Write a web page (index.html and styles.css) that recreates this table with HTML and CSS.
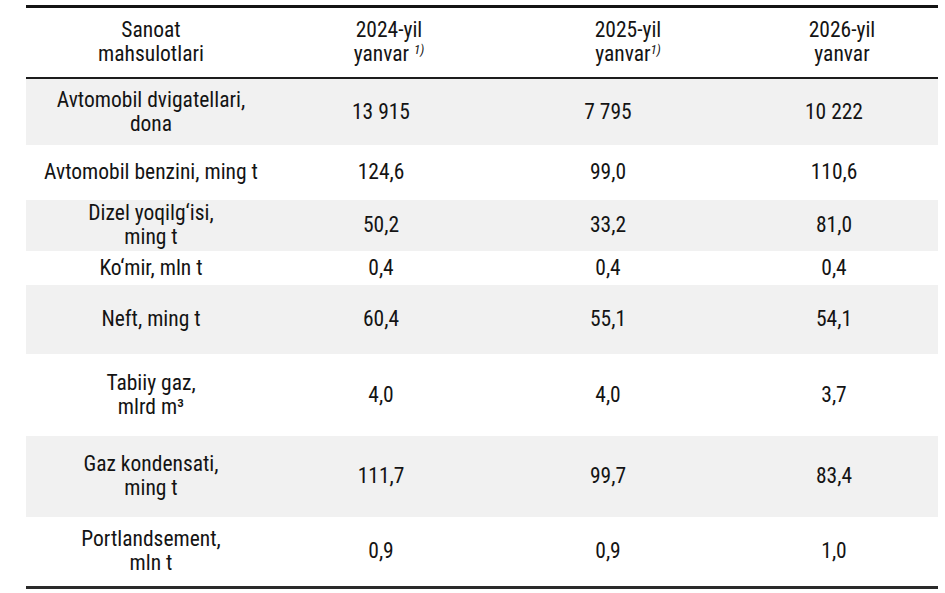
FILE: index.html
```html
<!DOCTYPE html>
<html lang="uz">
<head>
<meta charset="utf-8">
<title>Sanoat mahsulotlari</title>
<link rel="stylesheet" href="styles.css">
</head>
<body>
<table class="tbl">
  <colgroup>
    <col class="c1"><col class="c2"><col class="c3"><col class="c4">
  </colgroup>
  <thead>
    <tr class="h-head">
      <th>Sanoat<br>mahsulotlari</th>
      <th class="hs2">2024-yil<br>yanvar <sup class="fn">1)</sup></th>
      <th class="hs3">2025-yil<br>yanvar<sup class="fn">1)</sup></th>
      <th class="hs4">2026-yil<br>yanvar</th>
    </tr>
  </thead>
  <tbody>
    <tr class="gray h66"><td>Avtomobil dvigatellari,<br>dona</td><td>13 915</td><td>7 795</td><td>10 222</td></tr>
    <tr class="h54"><td>Avtomobil benzini, ming t</td><td>124,6</td><td>99,0</td><td>110,6</td></tr>
    <tr class="gray h51"><td>Dizel yoqilg‘isi,<br>ming t</td><td>50,2</td><td>33,2</td><td>81,0</td></tr>
    <tr class="h34"><td>Ko‘mir, mln t</td><td>0,4</td><td>0,4</td><td>0,4</td></tr>
    <tr class="gray h68"><td>Neft, ming t</td><td>60,4</td><td>55,1</td><td>54,1</td></tr>
    <tr class="h82"><td>Tabiiy gaz,<br>mlrd m³</td><td>4,0</td><td>4,0</td><td>3,7</td></tr>
    <tr class="gray h80"><td>Gaz kondensati,<br>ming t</td><td>111,7</td><td>99,7</td><td>83,4</td></tr>
    <tr class="h71"><td>Portlandsement,<br>mln t</td><td>0,9</td><td>0,9</td><td>1,0</td></tr>
  </tbody>
</table>
</body>
</html>
```
FILE: styles.css
```css
html, body {
  margin: 0;
  padding: 0;
  background: #ffffff;
}

body {
  font-family: Roboto, "Liberation Sans", sans-serif;
  font-stretch: condensed;
  font-size: 21.5px;
  line-height: 24px;
  color: #141414;
}

.tbl {
  margin: 5px 0 0 26px;
  width: 912px;
  border-collapse: collapse;
  table-layout: fixed;
  border-top: 3px solid #141414;
  border-bottom: 3px solid #2a2a2a;
}

.c1 { width: 250px; }
.c2 { width: 210px; }
.c3 { width: 244px; }
.c4 { width: 208px; }

.tbl th,
.tbl td {
  padding: 0;
  text-align: center;
  vertical-align: middle;
  font-weight: 400;
}

.tbl thead th {
  border-bottom: 2px solid #1c1c1c;
}

.hs2 { padding-left: 16px !important; }
.hs3 { padding-left: 40px !important; }
.hs4 { padding-left: 16px !important; }

.fn {
  font-size: 13px;
  font-style: italic;
  vertical-align: 7px;
  line-height: 0;
}

.gray { background: #f1f1f1; }

.h-head { height: 71px; }
.h66 { height: 67px; }
.h54 { height: 55px; }
.h51 { height: 51px; }
.h34 { height: 34px; }
.h68 { height: 69px; }
.h82 { height: 82px; }
.h80 { height: 81px; }
.h71 { height: 71px; }
```
